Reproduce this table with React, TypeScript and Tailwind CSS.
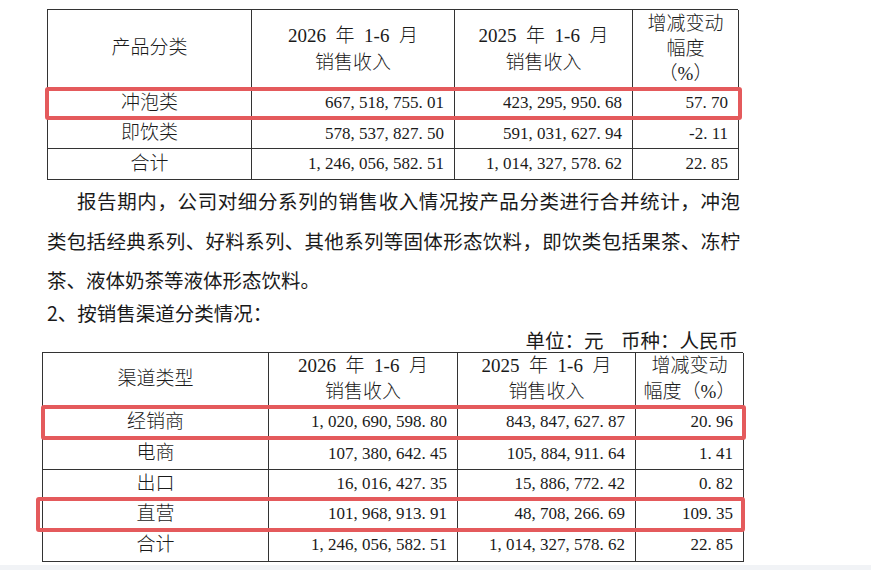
import React from "react";

const Num = ({ v }: { v: string }) => (
  <span className="text-[17px] font-['Liberation_Serif',serif]">
    {v.split("").map((c, i) =>
      c === "," || c === "." ? (
        <span key={i} className="inline-block w-[8.5px]">
          {c}
        </span>
      ) : (
        <React.Fragment key={i}>{c}</React.Fragment>
      )
    )}
  </span>
);

const cell = "border-r border-b border-[#333] flex items-center";

type Row = { name: string; a: string; b: string; c: string; h: string };

const t1Rows: Row[] = [
  { name: "冲泡类", a: "667,518,755.01", b: "423,295,950.68", c: "57.70", h: "h-[31px]" },
  { name: "即饮类", a: "578,537,827.50", b: "591,031,627.94", c: "-2.11", h: "h-[30px]" },
  { name: "合计", a: "1,246,056,582.51", b: "1,014,327,578.62", c: "22.85", h: "h-[31px]" },
];

const t2Rows: Row[] = [
  { name: "经销商", a: "1,020,690,598.80", b: "843,847,627.87", c: "20.96", h: "h-[32px]" },
  { name: "电商", a: "107,380,642.45", b: "105,884,911.64", c: "1.41", h: "h-[31px]" },
  { name: "出口", a: "16,016,427.35", b: "15,886,772.42", c: "0.82", h: "h-[30px]" },
  { name: "直营", a: "101,968,913.91", b: "48,708,266.69", c: "109.35", h: "h-[30px]" },
  { name: "合计", a: "1,246,056,582.51", b: "1,014,327,578.62", c: "22.85", h: "h-[32px]" },
];

function BodyRows({ rows }: { rows: Row[] }) {
  return (
    <>
      {rows.map((r) => (
        <React.Fragment key={r.name + r.a}>
          <div className={`${cell} ${r.h} justify-center`}>{r.name}</div>
          <div className={`${cell} ${r.h} justify-end pr-[10px]`}>
            <Num v={r.a} />
          </div>
          <div className={`${cell} ${r.h} justify-end pr-[10px]`}>
            <Num v={r.b} />
          </div>
          <div className={`${cell} ${r.h} justify-end pr-[10px]`}>
            <Num v={r.c} />
          </div>
        </React.Fragment>
      ))}
    </>
  );
}

const Period = ({ y }: { y: string }) => (
  <>
    {y}
    {"\u2002年\u20021-6\u2002月"}
  </>
);

export default function App() {
  return (
    <div className="w-[871px] h-[570px] bg-white overflow-hidden flex flex-col text-[#1a1a1a]">
      <div className="h-[565px] flex flex-col">
        {/* Table 1 */}
        <div className="relative ml-[47px] mt-[9px] w-[691px] font-['Liberation_Serif','Noto_Sans_CJK_SC',serif] font-light text-[19px]">
          <div className="grid grid-cols-[204px_203px_178px_106px] border-l border-t border-[#333]">
            <div className={`${cell} h-[78px] justify-center`}>产品分类</div>
            <div className={`${cell} h-[78px] justify-center text-center leading-[27px]`}>
              <div>
                <Period y="2026" />
                <br />
                销售收入
              </div>
            </div>
            <div className={`${cell} h-[78px] justify-center text-center leading-[27px]`}>
              <div>
                <Period y="2025" />
                <br />
                销售收入
              </div>
            </div>
            <div className={`${cell} h-[78px] justify-center text-center leading-[25px]`}>
              <div>
                增减变动
                <br />
                幅度
                <br />
                （%）
              </div>
            </div>
            <BodyRows rows={t1Rows} />
          </div>
          <div className="absolute left-[-2px] top-[78px] w-[697px] h-[33px] border-[4px] border-[#e45a5c] rounded-[3px]" />
        </div>

        {/* Paragraph */}
        <div className="ml-[47px] w-[693px] font-['Noto_Sans_CJK_SC',sans-serif] text-[19.5px] leading-[39.5px] mt-[1px]">
          <div className="indent-[30px] text-justify [text-align-last:justify] whitespace-nowrap">
            报告期内，公司对细分系列的销售收入情况按产品分类进行合并统计，冲泡
          </div>
          <div className="text-justify [text-align-last:justify] whitespace-nowrap">
            类包括经典系列、好料系列、其他系列等固体形态饮料，即饮类包括果茶、冻柠
          </div>
          <div>茶、液体奶茶等液体形态饮料。</div>
          <div className="leading-[26px]">2、按销售渠道分类情况：</div>
          <div className="leading-[25px] pt-[1px] text-right pr-[2px]">
            单位：元&nbsp;&nbsp;&nbsp;&nbsp;币种：人民币
          </div>
        </div>

        {/* Table 2 */}
        <div className="relative ml-[42px] w-[701px] font-['Liberation_Serif','Noto_Sans_CJK_SC',serif] font-light text-[19px]">
          <div className="grid grid-cols-[226px_189px_178px_108px] border-l border-t border-[#333]">
            <div className={`${cell} h-[54px] justify-center`}>渠道类型</div>
            <div className={`${cell} h-[54px] justify-center text-center leading-[26px]`}>
              <div>
                <Period y="2026" />
                <br />
                销售收入
              </div>
            </div>
            <div className={`${cell} h-[54px] justify-center text-center leading-[26px]`}>
              <div>
                <Period y="2025" />
                <br />
                销售收入
              </div>
            </div>
            <div className={`${cell} h-[54px] justify-center text-center leading-[26px]`}>
              <div>
                增减变动
                <br />
                幅度（%）
              </div>
            </div>
            <BodyRows rows={t2Rows} />
          </div>
          <div className="absolute left-[-1px] top-[53px] w-[705px] h-[35px] border-[4px] border-[#e45a5c] rounded-[3px]" />
          <div className="absolute left-[-6px] top-[145px] w-[709px] h-[35px] border-[4px] border-[#e45a5c] rounded-[3px]" />
        </div>
      </div>
      <div className="flex-1 bg-[#f1f3f6]" />
    </div>
  );
}
